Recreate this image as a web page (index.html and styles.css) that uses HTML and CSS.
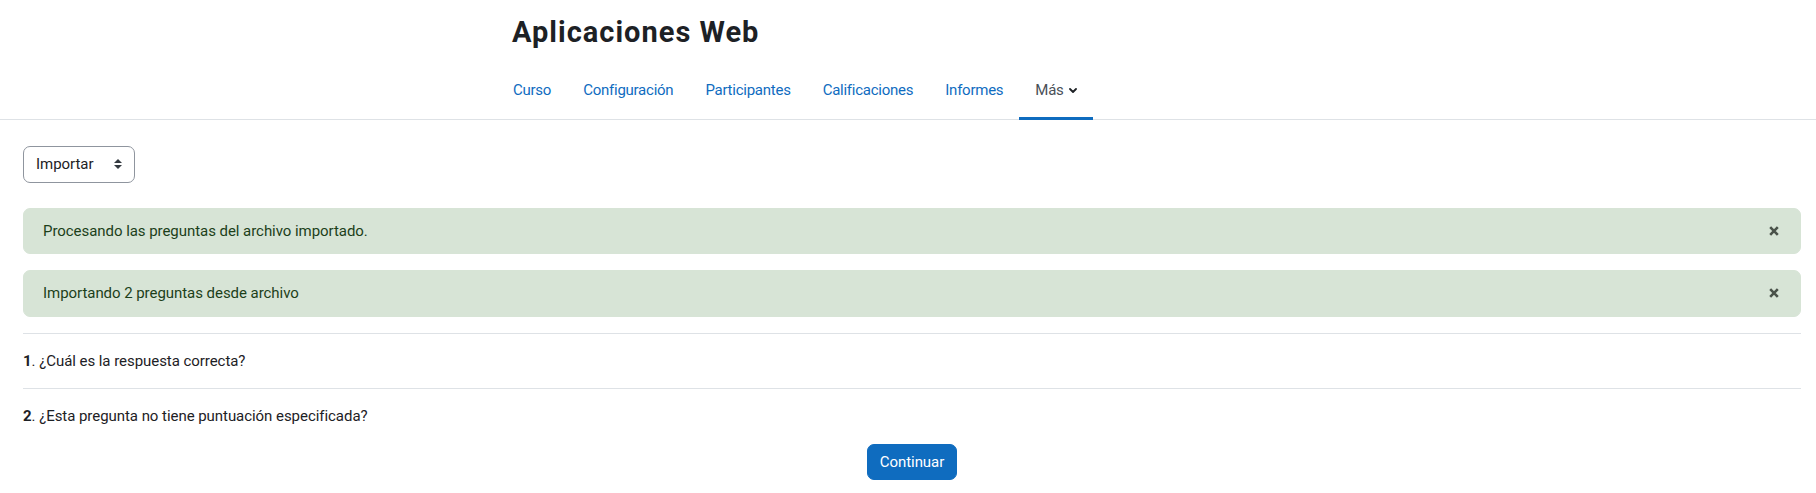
FILE: index.html
```html
<!DOCTYPE html>
<html lang="es">
<head>
<meta charset="utf-8">
<title>Aplicaciones Web: Importar</title>
<link rel="stylesheet" href="styles.css">
</head>
<body>
<header class="page-header">
  <div class="header-inner">
    <h1 class="course-title">Aplicaciones Web</h1>
    <nav class="secondary-nav">
      <ul class="nav-list">
        <li><a class="nav-link" href="#">Curso</a></li>
        <li><a class="nav-link" href="#">Configuración</a></li>
        <li><a class="nav-link" href="#">Participantes</a></li>
        <li><a class="nav-link" href="#">Calificaciones</a></li>
        <li><a class="nav-link" href="#">Informes</a></li>
        <li><a class="nav-link active" href="#">Más<svg class="chevron" viewBox="0 0 8 5" width="8" height="5"><path d="M1 1 L4 4 L7 1" fill="none" stroke="currentColor" stroke-width="1.8" stroke-linecap="round" stroke-linejoin="round"/></svg></a></li>
      </ul>
    </nav>
  </div>
</header>
<main class="main">
  <div class="select">
    <span>Importar</span>
    <svg class="select-arrow" viewBox="0 0 4 5" width="8" height="10"><path fill="#343a40" d="M2 0L0 2h4zm0 5L0 3h4z"/></svg>
  </div>
  <div class="alert">
    <span>Procesando las preguntas del archivo importado.</span>
    <button class="close" aria-label="Cerrar"><svg viewBox="0 0 10 10" width="10" height="10"><path d="M1.2 1.2L8.8 8.8M8.8 1.2L1.2 8.8" stroke="currentColor" stroke-width="2.6" stroke-linecap="butt"/></svg></button>
  </div>
  <div class="alert">
    <span>Importando 2 preguntas desde archivo</span>
    <button class="close" aria-label="Cerrar"><svg viewBox="0 0 10 10" width="10" height="10"><path d="M1.2 1.2L8.8 8.8M8.8 1.2L1.2 8.8" stroke="currentColor" stroke-width="2.6" stroke-linecap="butt"/></svg></button>
  </div>
  <hr class="divider">
  <p class="question"><strong>1</strong>. ¿Cuál es la respuesta correcta?</p>
  <hr class="divider">
  <p class="question"><strong>2</strong>. ¿Esta pregunta no tiene puntuación especificada?</p>
  <div class="btn-row">
    <button class="btn">Continuar</button>
  </div>
</main>
</body>
</html>
```
FILE: styles.css
```css
html, body {
  margin: 0;
  padding: 0;
  background: #fff;
}
body {
  font-family: Roboto, "Liberation Sans", sans-serif;
  font-size: 15px;
  line-height: 1.5;
  letter-spacing: -0.05px;
  color: #1d2125;
}
.page-header {
  border-bottom: 1px solid #dee2e6;
}
.header-inner {
  width: 822px;
  margin: 0 auto;
}
.course-title {
  margin: 0;
  height: 60px;
  box-sizing: border-box;
  padding: 15px 0 0 15px;
  font-size: 29px;
  line-height: 1.2;
  font-weight: 700;
  letter-spacing: 1px;
  color: #1d2125;
}
.nav-list {
  display: flex;
  list-style: none;
  margin: 0 0 -1px;
  padding: 0;
}
.nav-link {
  display: flex;
  align-items: center;
  gap: 5px;
  height: 60px;
  box-sizing: border-box;
  padding: 3px 16px 0;
  border-bottom: 3px solid transparent;
  color: #0f6cbf;
  text-decoration: none;
  letter-spacing: -0.25px;
}
.nav-link.active {
  color: #495057;
  border-bottom-color: #0f6cbf;
}
.chevron {
  color: #1d2125;
  margin-top: 1px;
}
.main {
  padding: 26px 15px 24px 23px;
}
.select {
  display: flex;
  align-items: center;
  justify-content: space-between;
  width: 112px;
  height: 36.5px;
  box-sizing: border-box;
  border: 1px solid #8f959e;
  border-radius: 7px;
  padding: 0 12px 0 12px;
  margin-bottom: 25px;
  color: #1d2125;
}
.alert {
  display: flex;
  align-items: center;
  justify-content: space-between;
  padding: 11px 21px 11px 19px;
  border: 1px solid #d7e4d6;
  background: #d7e4d6;
  color: #1c3f1a;
  border-radius: 7px;
  margin-bottom: 16px;
}
.close {
  display: flex;
  align-items: center;
  justify-content: center;
  padding: 0;
  border: 0;
  background: transparent;
  color: #4a524a;
  cursor: pointer;
}
.divider {
  border: 0;
  border-top: 1px solid #dee2e6;
  margin: 0;
}
.question {
  margin: 16px 0;
}
.question strong {
  font-weight: 700;
}
.btn-row {
  display: flex;
  justify-content: center;
}
.btn {
  font-family: inherit;
  font-size: 15px;
  line-height: 1.5;
  letter-spacing: -0.05px;
  background: #0f6cbf;
  color: #fff;
  border: 1px solid #0f6cbf;
  border-radius: 7px;
  padding: 6px 12px;
}
```
